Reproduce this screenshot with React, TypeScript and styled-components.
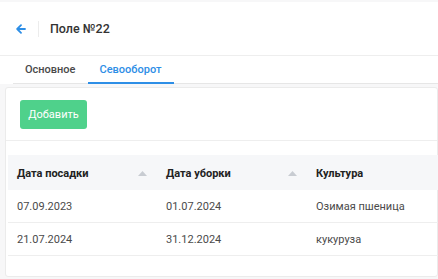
import styled, { createGlobalStyle } from 'styled-components';

const GlobalStyle = createGlobalStyle`
  body {
    margin: 0;
    background: #f7f7f8;
    font-family: Roboto, 'Noto Sans', sans-serif;
  }
`;

const rows = [
  { planted: '07.09.2023', harvested: '01.07.2024', crop: 'Озимая пшеница' },
  { planted: '21.07.2024', harvested: '31.12.2024', crop: 'кукуруза' },
];

function SortIcon() {
  return (
    <svg width="9" height="5" viewBox="0 0 9 5">
      <path d="M4.5 0 L9 5 L0 5 Z" fill="#c8ccd2" />
    </svg>
  );
}

function App() {
  return (
    <>
      <GlobalStyle />
      <Page>
        <TopBar>
          <BackButton>
            <svg width="10" height="10" viewBox="0 0 10 10">
              <path d="M9 5 H1.5 M5 1.2 L1.2 5 L5 8.8" stroke="#2d8ee6" strokeWidth="1.8" fill="none" strokeLinecap="round" strokeLinejoin="round" />
            </svg>
          </BackButton>
          <Divider />
          <Title>Поле №22</Title>
        </TopBar>
        <TabsBar>
          <TabList>
            <Tab>Основное</Tab>
            <Tab $active>Севооборот</Tab>
          </TabList>
        </TabsBar>
        <Card>
          <Toolbar>
            <AddButton>Добавить</AddButton>
          </Toolbar>
          <TableWrap>
            <Table>
              <colgroup>
                <col style={{ width: 149 }} />
                <col style={{ width: 150 }} />
                <col />
              </colgroup>
              <thead>
                <tr>
                  <HeadCell>
                    <HeadInner>
                      Дата посадки
                      <SortIcon />
                    </HeadInner>
                  </HeadCell>
                  <HeadCell>
                    <HeadInner>
                      Дата уборки
                      <SortIcon />
                    </HeadInner>
                  </HeadCell>
                  <HeadCell>
                    <HeadInner>Культура</HeadInner>
                  </HeadCell>
                </tr>
              </thead>
              <tbody>
                {rows.map((r) => (
                  <tr key={r.planted}>
                    <Cell>{r.planted}</Cell>
                    <Cell>{r.harvested}</Cell>
                    <Cell>{r.crop}</Cell>
                  </tr>
                ))}
              </tbody>
            </Table>
          </TableWrap>
        </Card>
      </Page>
    </>
  );
}

const Page = styled.div`
  width: 438px;
  height: 279px;
  overflow: hidden;
  padding-top: 2px;
  box-sizing: border-box;
`;

const TopBar = styled.div`
  height: 53px;
  background: #fff;
  border-bottom: 1px solid #eeeeee;
  display: flex;
  align-items: center;
  padding-left: 16px;
`;

const BackButton = styled.div`
  display: flex;
  align-items: center;
  width: 10px;
  height: 10px;
`;

const Divider = styled.div`
  width: 1px;
  height: 16px;
  background: #ececec;
  margin: 0 11px 0 12px;
`;

const Title = styled.div`
  font-size: 12.5px;
  font-weight: 500;
  color: #333;
`;

const TabsBar = styled.div`
  background: #fff;
  padding-left: 13px;
`;

const TabList = styled.div`
  display: flex;
  border-bottom: 1px solid #e6e6e6;
`;

const Tab = styled.div<{ $active?: boolean }>`
  height: 26px;
  padding: 0 12px;
  display: flex;
  align-items: center;
  font-size: 11px;
  font-weight: 500;
  color: ${(p) => (p.$active ? '#2d8ee6' : '#4a4a4a')};
  border-bottom: 2px solid ${(p) => (p.$active ? '#2d8ee6' : 'transparent')};
  margin-bottom: -1px;
`;

const Card = styled.div`
  margin: 3px 0 0 5px;
  background: #fff;
  border: 1px solid #ebebeb;
  border-radius: 3px;
  padding-bottom: 20px;
`;

const Toolbar = styled.div`
  padding: 12px 14px 11px;
  border-bottom: 1px solid #eeeeee;
`;

const AddButton = styled.button`
  width: 67px;
  height: 29px;
  border: none;
  border-radius: 3px;
  background: #4fd18b;
  color: #fff;
  font-family: inherit;
  font-size: 11px;
  padding: 0;
`;

const TableWrap = styled.div`
  padding: 14px 0 0 2px;
`;

const Table = styled.table`
  width: 600px;
  border-collapse: collapse;
  table-layout: fixed;
`;

const HeadCell = styled.th`
  height: 35px;
  background: #f6f7f9;
  padding: 0 10px 0 9px;
  text-align: left;
  font-size: 11px;
  font-weight: 700;
  color: #222;
`;

const HeadInner = styled.div`
  display: flex;
  align-items: center;
  justify-content: space-between;
  padding-top: 2px;
`;

const Cell = styled.td`
  height: 32px;
  padding: 0 9px;
  font-size: 11px;
  color: #4a4a4a;
  border-bottom: 1px solid #eeeeee;
`;

export default App;
